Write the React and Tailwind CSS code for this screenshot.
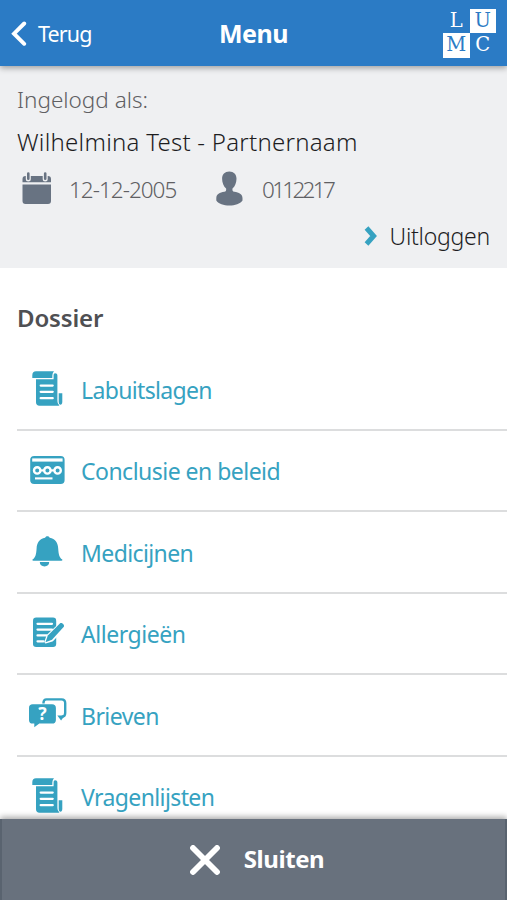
function ChevronLeft() {
    return (
        <svg width="16" height="26" viewBox="0 0 16 26" fill="none">
            <path d="M13.2 2.5L3 12.700L13.2 22.8" stroke="#fff" strokeWidth="3.9" strokeLinecap="round" strokeLinejoin="miter" />
        </svg>
    );
}

function ChevronRight() {
    return (
        <svg width="14" height="20" viewBox="0 0 14 20" fill="none">
            <path d="M2.5 2L9.6 10L2.5 18" stroke="#36a2c1" strokeWidth="5" />
        </svg>
    );
}

function CalendarIcon() {
    return (
        <svg width="30" height="34" viewBox="0 0 30 34" fill="#687382">
            <path d="M3.5 5H26a3 3 0 0 1 3 3v3.2H.5V8a3 3 0 0 1 3-3Z" />
            <path d="M.5 13.6H29V30a3 3 0 0 1-3 3H3.5a3 3 0 0 1-3-3Z" />
            <path d="M6.3 2.8V8M23.2 2.8V8" stroke="#eff0f2" strokeWidth="5" strokeLinecap="round" />
            <path d="M6.3 2.5V7.7M23.2 2.5V7.7" stroke="#687382" strokeWidth="2.600" strokeLinecap="round" />
        </svg>
    );
}

function PersonIcon() {
    return (
        <svg width="27" height="35" viewBox="0 0 27 35" fill="#687382">
            <path d="M13.3.5c4.500 0 7.200 3 7.200 7.300 0 3.800-1.500 7.700-4 9.700-.3 2 .1 2.900 1.800 3.300 4.600.9 8.200 2.300 8.200 6.500v2.200c-2.500 3.200-7.300 5-13.100 5S2.500 32.700.3 29.500v-2.200c0-4.200 3.500-5.600 8-6.500 1.700-.4 2.100-1.300 1.800-3.300-2.500-2-4-5.900-4-9.700 0-4.300 2.700-7.300 7.200-7.300Z" />
        </svg>
    );
}

function ScrollIcon() {
    return (
        <svg width="40" height="40" viewBox="0 0 40 40" fill="#36a2c1">
            <path d="M8 2.300H26c-1.400 1.500-1.700 3.300-1.700 5.500v1.100H4.300V6.300C4.300 3.700 5.700 2.300 8 2.300Z" />
            <path d="M8 10.200h17.600V6.300c0-1.200.6-2 1.500-2 1.300 0 2.300.8 2.300 2.200v24.800c0 2.500.6 3.700 2 4.900-.4.400-1 .600-1.900.6H11.500C9.300 36.800 8 35.500 8 33.300Z" />
            <path d="M30.700 24.200h3.600v8.300c0 2.200-.8 3.300-1.800 3.300s-1.800-1.200-1.800-3.300Z" />
            <path d="M12.700 16.600h12M12.700 22.800h12M12.700 29.200h12" stroke="#fff" strokeWidth="2.300" strokeLinecap="round" />
        </svg>
    );
}

function CardIcon() {
    return (
        <svg width="40" height="40" viewBox="0 0 40 40" fill="none">
            <rect x="2.200" y="6" width="34.400" height="28" rx="4" fill="#36a2c1" />
            <path d="M4.200 10h30.400" stroke="#fff" strokeWidth="3.200" />
            <path d="M7 28.400h17.500" stroke="#fff" strokeWidth="2.100" />
            <path d="M11 20.400h17" stroke="#fff" strokeWidth="2.200" />
            <g fill="#36a2c1" stroke="#fff" strokeWidth="2.400">
                <circle cx="9.200" cy="20.400" r="3.200" />
                <circle cx="19.400" cy="20.400" r="3.200" />
                <circle cx="29.600" cy="20.400" r="3.200" />
            </g>
        </svg>
    );
}

function BellIcon() {
    return (
        <svg width="40" height="40" viewBox="0 0 40 40" fill="#36a2c1">
            <path d="M19.400 4.200c1.200 0 2 .6 2.300 1.600 5.500 1 8.200 4.900 8.500 10.600.4 6.700 1.300 8.900 3.800 10.900.8.700.4 1.500-.5 1.500H5.300c-.9 0-1.300-.8-.5-1.500 2.500-2 3.400-4.200 3.800-10.900.3-5.700 3-9.600 8.500-10.600.3-1 1.100-1.600 2.300-1.600Z" />
            <path d="M11.800 30h9.400c0 2.900-1.900 4.400-4.700 4.400S11.800 32.900 11.800 30Z" />
        </svg>
    );
}

function NoteIcon() {
    return (
        <svg width="40" height="40" viewBox="0 0 40 40" fill="none">
            <rect x="5" y="4.500" width="23.200" height="29.500" rx="3.200" fill="#36a2c1" />
            <path d="M9.500 10.800h14.500M9.500 16.600h14.500M9.500 22.400h9M9.500 28.300h6" stroke="#fff" strokeWidth="2.200" strokeLinecap="round" />
            <path d="M18 28.800l2-5.800L32.500 11.200l3 3.400L24 27Z" fill="#36a2c1" stroke="#fff" strokeWidth="3.200" strokeLinejoin="round" />
            <path d="M17.500 29.200l2.300-6.600L31.900 10.400c1.900-1.500 5.300 1.700 3.700 3.700L24 26.800Z" fill="#36a2c1" />
        </svg>
    );
}

function ChatIcon() {
    return (
        <svg width="40" height="40" viewBox="0 0 40 40" fill="none">
            <path d="M15.500 8.500V7.800c0-2.200 1-3.400 3-3.400h15c2.500 0 3.700 1.500 3.700 3.700v9.800c0 2.300-1.300 3.700-3.500 3.700" stroke="#36a2c1" strokeWidth="2.400" />
            <path d="M29.300 20.400h6.200v1.800l-2.400 3.200Z" fill="#36a2c1" />
            <path d="M4.600 9.300h19.500c2.400 0 3.800 1.300 3.800 3.600v12c0 2.400-1.400 3.700-3.800 3.700H11.300L6.300 32.300v-3.700H4.600C2.300 28.600 1 27.300 1 24.900v-12C1 10.600 2.300 9.300 4.600 9.300Z" fill="#36a2c1" />
            <text x="14.500" y="25.400" textAnchor="middle" fill="#fff" fontSize="17.500" fontWeight="700" fontFamily="Noto Sans, sans-serif">?</text>
        </svg>
    );
}

const menuItems = [
    { label: 'Labuitslagen', icon: ScrollIcon, spacing: 'tracking-[-0.65px]' },
    { label: 'Conclusie en beleid', icon: CardIcon, spacing: 'tracking-[-0.52px]' },
    { label: 'Medicijnen', icon: BellIcon, spacing: 'tracking-[-0.6px]' },
    { label: 'Allergieën', icon: NoteIcon, spacing: 'tracking-[-0.45px]' },
    { label: 'Brieven', icon: ChatIcon, spacing: 'tracking-[-0.55px]' },
    { label: 'Vragenlijsten', icon: ScrollIcon, spacing: 'tracking-[-0.6px]' }
];

export default function App() {
    return (
        <div className="h-[900px] w-[507px] flex flex-col overflow-hidden bg-white font-['Noto_Sans',sans-serif] whitespace-nowrap">
            {/* Header */}
            <header className="relative z-10 h-[66px] shrink-0 grid grid-cols-3 items-center bg-[#2b7bc5] text-white shadow-[0_2px_6px_rgba(0,0,0,0.35)]">
                <button className="flex items-center pl-[11px] pt-px">
                    <ChevronLeft />
                    <span className="ml-[11px] text-[21.5px] leading-[30px] tracking-[-0.9px]">Terug</span>
                </button>
                <h1 className="text-center text-[25px] leading-[34px] font-bold tracking-[-0.5px]">Menu</h1>
                <div className="justify-self-end mr-[11px] grid grid-cols-2 w-[53px] h-[49px] font-['DejaVu_Serif',serif] text-[19.5px] leading-[24px] text-center">
                    <span>L</span>
                    <span className="bg-white text-[#2b7bc5]">U</span>
                    <span className="bg-white text-[#2b7bc5]">M</span>
                    <span>C</span>
                </div>
            </header>

            {/* Logged in user */}
            <section className="h-[202px] shrink-0 bg-[#eff0f2] pl-[17px] pr-[17px] pt-[19px] text-[#5f6063]">
                <p className="text-[22.5px] leading-[30px] font-light">Ingelogd als:</p>
                <p className="mt-3 text-[24px] leading-[30px] font-light tracking-[0.25px] text-[#1d1d1f]">Wilhelmina Test - Partnernaam</p>
                <div className="mt-3 flex items-center h-[38px] text-[22.5px] font-light">
                    <div className="w-[52px] pl-[5px]"><CalendarIcon /></div>
                    <span className="w-[147px] pt-[3px] tracking-[-1px]">12-12-2005</span>
                    <div className="w-[46px]"><PersonIcon /></div>
                    <span className="pt-[3px] tracking-[-2.7px]">0112217</span>
                </div>
                <div className="mt-[14px] flex items-center justify-end gap-3 text-[23px] leading-[30px] font-light tracking-[-0.25px] text-[#1d1d1f]">
                    <ChevronRight />
                    <span>Uitloggen</span>
                </div>
            </section>

            {/* Menu list */}
            <main className="flex-1 min-h-0 overflow-hidden pl-[17px]">
                <h2 className="pt-[33px] h-[81px] text-[24px] leading-[34px] font-semibold tracking-[-0.15px] text-[#4f5053]">Dossier</h2>
                <ul>
                    {menuItems.map((item) => {
                        const Icon = item.icon;
                        return (
                            <li key={item.label} className="h-[81.5px] flex items-center border-b-2 border-[#dcddde] pl-[11px] text-[#36a2c1]">
                                <Icon />
                                <span className={`ml-[13px] pt-[2px] text-[23px] leading-[30px] ${item.spacing}`}>{item.label}</span>
                            </li>
                        );
                    })}
                </ul>
            </main>

            {/* Close bar */}
            <footer className="relative z-10 h-[81px] shrink-0 flex items-center justify-center gap-[24px] bg-[#68717d] border-x-2 border-[#59636f] pl-[7px] text-white shadow-[0_-2px_6px_rgba(0,0,0,0.35)]">
                <svg width="30" height="30" viewBox="0 0 30 30" fill="none">
                    <path d="M3 3L27 27M27 3L3 27" stroke="#fff" strokeWidth="5.8" strokeLinecap="round" />
                </svg>
                <span className="pb-[2px] text-[24px] leading-[34px] font-bold tracking-[-0.45px]">Sluiten</span>
            </footer>
        </div>
    );
}
